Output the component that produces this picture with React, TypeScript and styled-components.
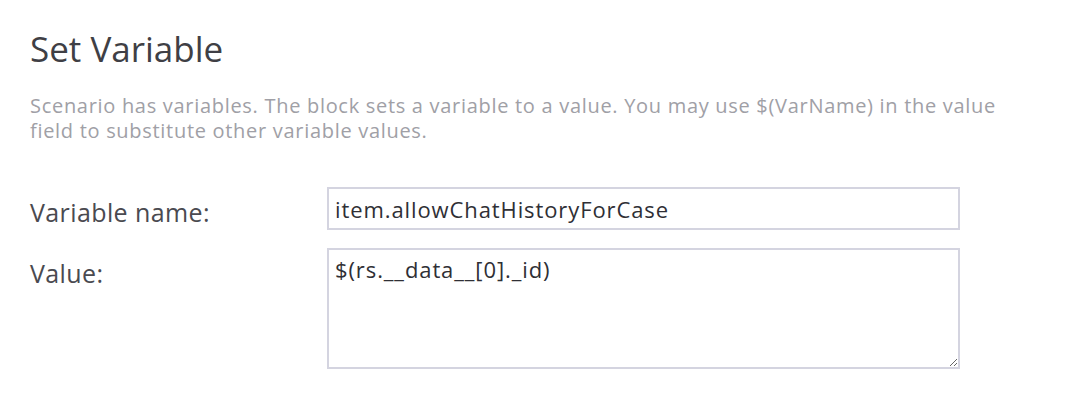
import styled, { createGlobalStyle } from 'styled-components';

const GlobalStyle = createGlobalStyle`
  body {
    margin: 0;
    background: #fff;
    font-family: 'Open Sans', 'Noto Sans', sans-serif;
  }
`;

const Page = styled.div`
  padding: 29px 30px 0 30px;
  width: 1010px;
`;

const Title = styled.h1`
  margin: 0;
  font-size: 35px;
  font-weight: 400;
  line-height: 40px;
  color: #3f3f45;
`;

const Description = styled.p`
  margin: 24px 0 0 0;
  max-width: 1000px;
  font-size: 20px;
  line-height: 25px;
  letter-spacing: 0.7px;
  color: #a0a0a6;
`;

const Form = styled.div`
  margin-top: 44px;
  display: grid;
  grid-template-columns: 297px 633px;
  row-gap: 18px;
`;

const Label = styled.label`
  align-self: start;
  padding-top: 9px;
  font-size: 25px;
  line-height: 32px;
  letter-spacing: 0.4px;
  color: #4a4a50;
`;

const fieldStyles = `
  box-sizing: border-box;
  width: 100%;
  margin: 0;
  border: 2px solid #d4d4e0;
  background: #fff;
  font-family: 'Open Sans', 'Noto Sans', sans-serif;
  font-size: 22px;
  letter-spacing: 0.9px;
  color: #2f2f35;
  padding: 0 6px;
  outline: none;
`;

const TextInput = styled.input`
  ${fieldStyles}
  height: 43px;
`;

const TextArea = styled.textarea`
  ${fieldStyles}
  display: block;
  height: 121px;
  padding-top: 4px;
  line-height: 30px;
  resize: vertical;
`;

export default function App() {
  return (
    <>
      <GlobalStyle />
      <Page>
        <Title>Set Variable</Title>
        <Description>
          Scenario has variables. The block sets a variable to a value. You may use $(VarName) in the value
          field to substitute other variable values.
        </Description>
        <Form>
          <Label htmlFor="var-name">Variable name:</Label>
          <TextInput id="var-name" defaultValue="item.allowChatHistoryForCase" />
          <Label htmlFor="var-value">Value:</Label>
          <TextArea id="var-value" defaultValue="$(rs.__data__[0]._id)" />
        </Form>
      </Page>
    </>
  );
}
